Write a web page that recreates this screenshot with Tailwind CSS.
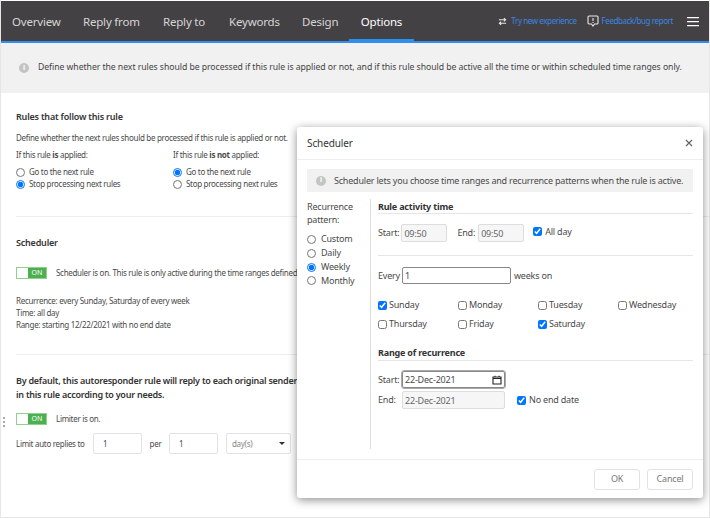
<!DOCTYPE html>
<html lang="en">
<head>
  <meta charset="UTF-8" />
  <title>Autoresponder rule options</title>
  <script src="https://cdn.jsdelivr.net/npm/@tailwindcss/browser@4"></script>
</head>
<body class="relative w-[710px] h-[518px] overflow-hidden bg-white font-['Noto_Sans',sans-serif] text-[8px] tracking-[-0.3px] text-[#4a4a4a]">
  <div class="h-[518px] flex flex-col border border-t-0 border-[#e6e6e6]">
    <!-- top nav -->
    <div class="mt-px h-[42px] shrink-0 flex items-stretch bg-[#444145] border-b-2 border-[#2f8fee] pl-[11px] pr-[10px] text-[11.5px] tracking-[-0.2px] text-[#d5d5d5]">
      <a class="w-[71px] pt-[12px]">Overview</a>
      <a class="w-[80px] pt-[12px]">Reply from</a>
      <a class="w-[66px] pt-[12px]">Reply to</a>
      <a class="w-[73px] pt-[12px]">Keywords</a>
      <a class="w-[47px] pt-[12px]">Design</a>
      <a class="w-[65px] -mb-[2px] pt-[12px] text-center text-white border-b-[4px] border-[#2f8fee]">Options</a>
      <div class="ml-auto flex items-center text-[8px] tracking-[-0.4px] text-[#3a86e0]">
        <span class="flex items-center gap-[4px]">
          <svg class="w-[9px] h-[9px]" viewBox="0 0 10 10" fill="none" stroke="#e8e8e8" stroke-width="1.2"><path d="M1 3h7M6.5 1.2 8.5 3 6.5 4.8M9 7H2M3.5 5.2 1.5 7l2 1.8"/></svg>
          Try new experience
        </span>
        <span class="ml-[10px] flex items-center gap-[3px]">
          <svg class="w-[12px] h-[13px]" viewBox="0 0 12 13" fill="none" stroke="#e8e8e8" stroke-width="1.1"><path d="M2 1h8a1 1 0 0 1 1 1v6a1 1 0 0 1-1 1H7.5L6 11 4.5 9H2a1 1 0 0 1-1-1V2a1 1 0 0 1 1-1zM6 3v3M6 7v1"/></svg>
          Feedback/bug report
        </span>
        <svg class="ml-[14px] w-[12px] h-[11px]" viewBox="0 0 12 11" fill="#fff"><path d="M0 1h12v1.3H0zM0 5h12v1.3H0zM0 9h12v1.3H0z"/></svg>
      </div>
    </div>
    <!-- info banner -->
    <div class="h-[50px] shrink-0 flex items-center gap-[9px] bg-[#f1f1f1] pl-[18px] text-[8.7px] tracking-[-0.06px] text-[#444]">
      <span class="shrink-0 w-[10px] h-[10px] rounded-full bg-[#c4c4c4] text-white text-[7px] font-bold flex items-center justify-center">i</span>
      <span class="whitespace-nowrap">Define whether the next rules should be processed if this rule is applied or not, and if this rule should be active all the time or within scheduled time ranges only.</span>
    </div>
    <!-- page body -->
    <div class="pl-[15px] flex flex-col">
      <h3 class="mt-[17px] text-[9px] tracking-[-0.2px] font-semibold text-[#333] leading-[13px]">Rules that follow this rule</h3>
      <p class="mt-[9px] leading-[12px]">Define whether the next rules should be processed if this rule is applied or not.</p>
      <div class="mt-[5px] flex">
        <div class="w-[157px] flex flex-col">
          <p class="leading-[12px]">If this rule <b>is</b> applied:</p>
          <label class="mt-[5px] h-[12px] flex items-center gap-[4px]"><input type="radio" name="a" class="m-0 w-[9px] h-[9px]" />Go to the next rule</label>
          <label class="h-[12px] flex items-center gap-[4px]"><input type="radio" name="a" checked class="m-0 w-[9px] h-[9px]" />Stop processing next rules</label>
        </div>
        <div class="flex flex-col">
          <p class="leading-[12px]">If this rule <b>is not</b> applied:</p>
          <label class="mt-[5px] h-[12px] flex items-center gap-[4px]"><input type="radio" name="b" checked class="m-0 w-[9px] h-[9px]" />Go to the next rule</label>
          <label class="h-[12px] flex items-center gap-[4px]"><input type="radio" name="b" class="m-0 w-[9px] h-[9px]" />Stop processing next rules</label>
        </div>
      </div>
      <hr class="mt-[26px] border-[#eee]" />
      <h3 class="mt-[19px] text-[9px] tracking-[-0.2px] font-semibold text-[#333] leading-[13px]">Scheduler</h3>
      <div class="mt-[18px] flex items-center gap-[9px]">
        <div class="w-[31px] h-[12px] flex border border-[#8fd08f] bg-[#4caf50] text-white text-[7px] tracking-normal leading-[10px]">
          <span class="w-[11px] bg-white"></span><span class="flex-1 text-center">ON</span>
        </div>
        <span class="whitespace-nowrap">Scheduler is on. This rule is only active during the time ranges defined</span>
      </div>
      <div class="mt-[16px] leading-[12px]">
        <p>Recurrence: every Sunday, Saturday of every week</p>
        <p>Time: all day</p>
        <p>Range: starting 12/22/2021 with no end date</p>
      </div>
      <hr class="mt-[23px] border-[#eee]" />
      <p class="mt-[19px] text-[9px] tracking-[-0.25px] font-semibold text-[#333] leading-[14px] whitespace-nowrap">By default, this autoresponder rule will reply to each original sender<br />in this rule according to your needs.</p>
      <div class="mt-[11px] flex items-center gap-[9px]">
        <div class="w-[31px] h-[12px] flex border border-[#8fd08f] bg-[#4caf50] text-white text-[7px] tracking-normal leading-[10px]">
          <span class="w-[11px] bg-white"></span><span class="flex-1 text-center">ON</span>
        </div>
        <span>Limiter is on.</span>
      </div>
      <div class="mt-[8px] flex items-center">
        <span class="w-[77px] whitespace-nowrap">Limit auto replies to</span>
        <input value="1" class="w-[49px] h-[21px] px-[9px] border border-[#dfe3e8] rounded-[2px]" />
        <span class="w-[27px] text-center">per</span>
        <input value="1" class="w-[49px] h-[21px] px-[9px] border border-[#dfe3e8] rounded-[2px]" />
        <div class="ml-[8px] w-[65px] h-[21px] px-[5px] flex items-center justify-between border border-[#dfe3e8] rounded-[2px] text-[#888]">
          day(s)
          <span class="border-x-[3px] border-x-transparent border-t-[3px] border-t-[#333]"></span>
        </div>
      </div>
    </div>
  </div>

  <!-- left edge drag handle -->
  <div class="absolute left-[3px] top-[417px] flex flex-col gap-[2px]">
    <span class="w-[2px] h-[2px] bg-[#aaa]"></span><span class="w-[2px] h-[2px] bg-[#aaa]"></span><span class="w-[2px] h-[2px] bg-[#aaa]"></span>
  </div>

  <!-- scheduler dialog -->
  <div class="absolute left-[297px] top-[127px] w-[406px] h-[371px] flex flex-col bg-white rounded-[3px] shadow-[0_2px_10px_rgba(0,0,0,0.45)] text-[9px] tracking-[-0.2px]">
    <div class="h-[33px] shrink-0 flex items-center justify-between pl-[10px] pr-[10px] pt-[1px] border-b border-[#eee]">
      <span class="text-[10px] tracking-[-0.1px] text-[#333]">Scheduler</span>
      <svg class="w-[8px] h-[8px] -mt-[2px]" viewBox="0 0 8 8" stroke="#666" stroke-width="1.2"><path d="M1 1l6 6M7 1 1 7"/></svg>
    </div>
    <div class="mx-[10px] mt-[9px] h-[23px] shrink-0 flex items-center gap-[8px] pl-[9px] bg-[#f1f1f1]">
      <span class="shrink-0 w-[10px] h-[10px] rounded-full bg-[#c4c4c4] text-white text-[7px] font-bold flex items-center justify-center">i</span>
      <span class="whitespace-nowrap">Scheduler lets you choose time ranges and recurrence patterns when the rule is active.</span>
    </div>
    <div class="flex flex-1 ml-[10px] mr-[10px] mt-[7px]">
      <div class="w-[64px] shrink-0 border-r border-[#ddd] h-[250px]">
        <p class="leading-[13px] mt-[1px]">Recurrence pattern:</p>
        <div class="mt-[6px] flex flex-col">
          <label class="h-[14px] flex items-center gap-[5px]"><input type="radio" name="r" class="m-0 w-[9px] h-[9px]" />Custom</label>
          <label class="h-[14px] flex items-center gap-[5px]"><input type="radio" name="r" class="m-0 w-[9px] h-[9px]" />Daily</label>
          <label class="h-[14px] flex items-center gap-[5px]"><input type="radio" name="r" checked class="m-0 w-[9px] h-[9px]" />Weekly</label>
          <label class="h-[13px] flex items-center gap-[5px]"><input type="radio" name="r" class="m-0 w-[9px] h-[9px]" />Monthly</label>
        </div>
      </div>
      <div class="flex-1 pl-[7px] flex flex-col">
        <h4 class="h-[15px] pt-[1px] font-bold text-[9px] text-[#333] leading-[13px] border-b border-[#e6e6e6]">Rule activity time</h4>
        <div class="mt-[10px] flex items-center">
          <span>Start:</span>
          <input disabled value="09:50" class="ml-[2px] w-[46px] h-[18px] px-[2px] text-[#666] bg-[#f6f6f6] border border-[#ddd] rounded-[2px]" />
          <span class="ml-[10px]">End:</span>
          <input disabled value="09:50" class="ml-[3px] w-[46px] h-[18px] px-[2px] text-[#666] bg-[#f6f6f6] border border-[#ddd] rounded-[2px]" />
          <label class="ml-[9px] flex items-center gap-[3px] self-start mt-[1px]"><input type="checkbox" checked class="m-0 w-[9px] h-[9px]" />All day</label>
        </div>
        <hr class="mt-[13px] border-[#e6e6e6]" />
        <div class="mt-[11px] flex items-center">
          <span>Every</span>
          <input value="1" class="ml-[2px] w-[109px] h-[17px] px-[2px] border border-[#888] rounded-[2px]" />
          <span class="ml-[3px]">weeks on</span>
        </div>
        <div class="mt-[15px] grid grid-cols-[80px_80px_80px_1fr] gap-y-[7px] leading-[12px]">
          <label class="flex items-center gap-[2px]"><input type="checkbox" checked class="m-0 w-[9px] h-[9px]" />Sunday</label>
          <label class="flex items-center gap-[2px]"><input type="checkbox" class="m-0 w-[9px] h-[9px]" />Monday</label>
          <label class="flex items-center gap-[2px]"><input type="checkbox" class="m-0 w-[9px] h-[9px]" />Tuesday</label>
          <label class="flex items-center gap-[2px]"><input type="checkbox" class="m-0 w-[9px] h-[9px]" />Wednesday</label>
          <label class="flex items-center gap-[2px]"><input type="checkbox" class="m-0 w-[9px] h-[9px]" />Thursday</label>
          <label class="flex items-center gap-[2px]"><input type="checkbox" class="m-0 w-[9px] h-[9px]" />Friday</label>
          <label class="flex items-center gap-[2px]"><input type="checkbox" checked class="m-0 w-[9px] h-[9px]" />Saturday</label>
        </div>
        <h4 class="mt-[17px] h-[14px] font-bold text-[9px] text-[#333] leading-[12px] border-b border-[#e6e6e6]">Range of recurrence</h4>
        <div class="mt-[10px] flex items-center">
          <span class="w-[24px]">Start:</span>
          <div class="w-[103px] h-[17px] px-[2px] flex items-center justify-between border border-[#888] rounded-[2px] outline outline-[#aaa]">
            22-Dec-2021
            <svg class="w-[10px] h-[10px]" viewBox="0 0 10 10" fill="none" stroke="#222" stroke-width="1.1"><path d="M1 2h8v7H1zM1 3.5h8M3 .8v1.5M7 .8v1.5"/></svg>
          </div>
        </div>
        <div class="mt-[3px] flex items-center">
          <span class="w-[24px]">End:</span>
          <input disabled value="22-Dec-2021" class="w-[103px] h-[18px] px-[2px] text-[#666] bg-[#f6f6f6] border border-[#ddd] rounded-[2px]" />
          <label class="ml-[12px] flex items-center gap-[3px]"><input type="checkbox" checked class="m-0 w-[9px] h-[9px]" />No end date</label>
        </div>
      </div>
    </div>
    <div class="h-[39px] shrink-0 flex items-center justify-end gap-[7px] pr-[10px] border-t border-[#eee]">
      <button class="w-[46px] h-[21px] border border-[#dfe3e8] rounded-[3px] text-[#777]">OK</button>
      <button class="w-[46px] h-[21px] border border-[#dfe3e8] rounded-[3px] text-[#777]">Cancel</button>
    </div>
  </div>
</body>
</html>
